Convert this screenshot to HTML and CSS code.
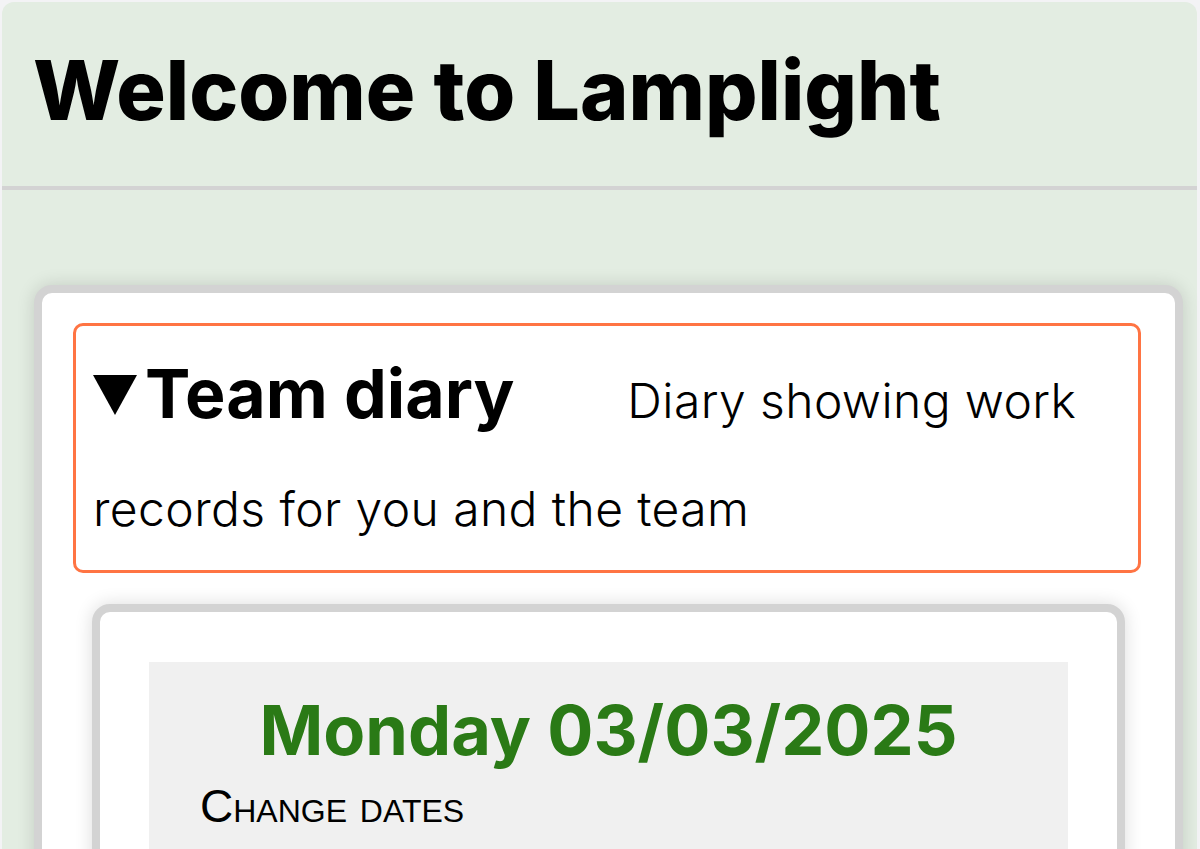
FILE: index.html
```html
<!DOCTYPE html>
<html lang="en">
<head>
<meta charset="utf-8">
<title>Welcome to Lamplight</title>
<link rel="stylesheet" href="styles.css">
</head>
<body>
<div class="page">
  <header class="page-header">
    <h1 class="page-title">Welcome to Lamplight</h1>
  </header>
  <main class="content">
    <section class="card">
      <div class="widget-head">
        <span class="toggle" aria-hidden="true"></span><h2 class="widget-title">Team diary</h2><span class="widget-desc">Diary showing work records for you and the team</span>
      </div>
      <div class="inner-card">
        <div class="diary-panel">
          <h2 class="diary-date">Monday 03/03/2025</h2>
          <div class="change-dates">Change dates</div>
        </div>
      </div>
    </section>
  </main>
</div>
</body>
</html>
```

FILE: styles.css
```css
html, body {
  margin: 0;
  padding: 0;
  background: #f3f3f5;
  height: 100%;
  overflow: hidden;
}

.page {
  margin: 2px 3px 0 2px;
  background: #e3ede2;
  border-radius: 12px 12px 0 0;
  min-height: 900px;
  font-family: "Inter", "Liberation Sans", sans-serif;
  color: #000;
}

.page-header {
  box-sizing: border-box;
  height: 188px;
  border-bottom: 4px solid #d3d3d3;
  padding-left: 31px;
}

.page-title {
  margin: 0;
  padding-top: 38px;
  font-size: 82.5px;
  font-weight: 800;
  line-height: 100px;
}

.content {
  padding: 95px 14px 0 32px;
}

.card {
  background: #fff;
  border: 8px solid #d3d3d3;
  border-radius: 18px;
  box-shadow: 0 0 18px rgba(0, 0, 0, 0.14);
  padding: 30px 34px 0 31px;
}

.widget-head {
  border: 3px solid #ff7443;
  border-radius: 10px;
  padding: 13px 17px 7px 17px;
  line-height: 108px;
  font-size: 48px;
}

.toggle {
  display: inline-block;
  width: 0;
  height: 0;
  border-left: 22px solid transparent;
  border-right: 22px solid transparent;
  border-top: 40px solid #000;
  margin: 0 8px 3px 0;
  vertical-align: baseline;
}

.widget-title {
  display: inline;
  margin: 0 113px 0 0;
  font-size: 68px;
  font-weight: 700;
}

.widget-desc {
  font-weight: 300;
  font-size: 48px;
  letter-spacing: 0.4px;
}

.inner-card {
  margin: 31px 16px 0 19px;
  border: 8px solid #d3d3d3;
  border-radius: 18px;
  box-shadow: 0 0 18px rgba(0, 0, 0, 0.14);
  padding: 50px 49px 0 49px;
  background: #fff;
  min-height: 300px;
}

.diary-panel {
  background: #f0f0f0;
  padding: 24px 0 40px 51px;
  min-height: 300px;
}

.diary-date {
  margin: 0 0 0 -51px;
  text-align: center;
  color: #2a7a16;
  font-size: 68.5px;
  font-weight: 700;
  line-height: 90px;
}

.change-dates {
  font-family: "Liberation Sans", sans-serif;
  font-variant: small-caps;
  font-size: 46px;
  line-height: 60px;
}
```
